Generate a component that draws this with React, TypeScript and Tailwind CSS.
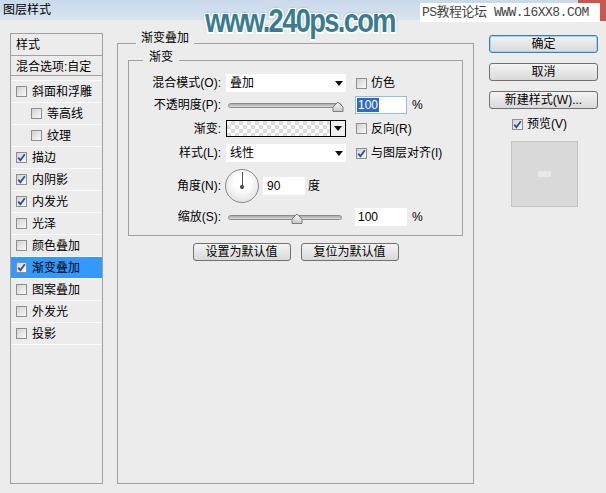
import React from 'react';

const FONT = "font-['Liberation_Sans','Noto_Sans_CJK_SC',sans-serif]";

const Check = ({ checked }: { checked?: boolean }) => (
  <span className="relative block w-[11px] h-[11px] shrink-0 border border-[#8e8e8e] bg-linear-to-br from-[#d2d2d2] to-[#f9f9f9]">
    {checked && (
      <svg className="absolute left-0 top-0" width="9" height="9" viewBox="0 0 9 9">
        <path d="M1.3 4.6 L3.4 7.2 L7.8 1.2" fill="none" stroke="#2b4ea2" strokeWidth="1.8" />
      </svg>
    )}
  </span>
);

const Arrow = () => (
  <svg width="8" height="5" viewBox="0 0 8 5">
    <path d="M0 0 H8 L4 5 Z" fill="#111" />
  </svg>
);

const Thumb = () => (
  <svg width="12" height="11" viewBox="0 0 12 11">
    <defs>
      <linearGradient id="tg" x1="0" y1="0" x2="0" y2="1">
        <stop offset="0" stopColor="#fafafa" />
        <stop offset="1" stopColor="#c8c8c8" />
      </linearGradient>
    </defs>
    <path d="M1 10.5 V6 L6 1 L11 6 V10.5 Z" fill="url(#tg)" stroke="#7c7c7c" />
  </svg>
);

const Slider = ({ pos }: { pos: number }) => (
  <div className="relative w-[120px] h-[18px] flex items-center">
    <div className="ml-[2px] w-[114px] h-[5px] rounded-full border border-[#8c8c8c] bg-linear-to-b from-[#a8a8a8] to-[#dedede]" />
    <div className="absolute top-[5px]" style={{ left: pos }}>
      <Thumb />
    </div>
  </div>
);

const Btn = ({ label, w, primary }: { label: string; w: string; primary?: boolean }) => (
  <div
    className={`${w} h-[18px] flex items-center justify-center rounded-[3px] border bg-linear-to-b from-[#f4f4f4] to-[#d9d9d9] text-[12px] text-black ${
      primary ? 'border-[#3c7fb1] shadow-[inset_0_0_0_1px_#9fd2f2]' : 'border-[#707070]'
    }`}
  >
    {label}
  </div>
);

const Select = ({ value }: { value: string }) => (
  <div className="w-[120px] h-[18px] bg-white flex items-center justify-between pl-[4px] pr-[3px] text-[12px]">
    <span>{value}</span>
    <Arrow />
  </div>
);

const Label = ({ text }: { text: string }) => (
  <div className="w-[92px] text-right text-[12px] leading-[14px] text-black">{text}</div>
);

const styles: { name: string; checked?: boolean; sub?: boolean; active?: boolean }[] = [
  { name: '斜面和浮雕' },
  { name: '等高线', sub: true },
  { name: '纹理', sub: true },
  { name: '描边', checked: true },
  { name: '内阴影', checked: true },
  { name: '内发光', checked: true },
  { name: '光泽' },
  { name: '颜色叠加' },
  { name: '渐变叠加', checked: true, active: true },
  { name: '图案叠加' },
  { name: '外发光' },
  { name: '投影' },
];

export default function App() {
  return (
    <div className={`relative w-[606px] h-[493px] overflow-hidden bg-[#ececec] text-black ${FONT}`}>
      {/* title bar */}
      <div className="h-[20px] bg-linear-to-b from-[#c8d9ea] to-[#d8e4f0] pl-[3px] flex items-center text-[12px]">
        图层样式
      </div>

      <div className="flex items-start">
        {/* style list */}
        <div className="mt-[13px] ml-[10px] w-[93px] h-[451px] border border-[#a0a0a0] text-[12px]">
          <div className="h-[22px] border-b border-[#a0a0a0] pl-[5px] flex items-center">样式</div>
          <div className="h-[20px] border-b border-[#a0a0a0] pl-[5px] pt-[2px] flex items-center">混合选项:自定</div>
          <div className="pt-[4px]">
            {styles.map((s) => (
              <div key={s.name} className="h-[22px] border-t border-[#fbfbfb]">
                <div
                  className={`h-[21px] flex items-center ${s.sub ? 'pl-[20px]' : 'pl-[5px]'} ${
                    s.active ? 'bg-[#3399ff]' : ''
                  }`}
                >
                  <Check checked={s.checked} />
                  <span className="ml-[5px]">{s.name}</span>
                </div>
              </div>
            ))}
            <div className="border-t border-[#fbfbfb]" />
          </div>
        </div>

        {/* main group */}
        <div className="relative mt-[23px] ml-[14px] w-[357px] h-[441px] border border-[#a0a0a0]">
          <div className="absolute -top-[13px] left-[18px] px-[5px] bg-[#ececec] text-[12px] leading-[14px]">渐变叠加</div>

          <div className="relative mt-[16px] ml-[10px] w-[335px] h-[176px] border border-[#a0a0a0]">
            <div className="absolute -top-[11px] left-[14px] px-[6px] bg-[#ececec] text-[12px] leading-[14px]">渐变</div>

            {/* row 1 */}
            <div className="mt-[13px] h-[18px] flex items-center">
              <Label text="混合模式(O):" />
              <div className="ml-[5px]">
                <Select value="叠加" />
              </div>
              <div className="ml-[10px]">
                <Check />
              </div>
              <span className="ml-[4px] text-[12px]">仿色</span>
            </div>

            {/* row 2 */}
            <div className="mt-[4px] h-[18px] flex items-center">
              <Label text="不透明度(P):" />
              <div className="ml-[5px]">
                <Slider pos={106} />
              </div>
              <div className="ml-[9px] w-[52px] h-[18px] bg-white border border-[#8fbfe8] flex items-center pl-[1px] text-[12px]">
                <span className="bg-[#3169c6] text-white px-[1px] leading-[14px]">100</span>
              </div>
              <span className="ml-[5px] text-[12px]">%</span>
            </div>

            {/* row 3 */}
            <div className="mt-[6px] h-[17px] flex items-center">
              <Label text="渐变:" />
              <div className="ml-[5px] flex h-[17px] border border-black">
                <div className="w-[103px] h-full bg-white bg-[linear-gradient(45deg,#dcdcdc_25%,transparent_25%,transparent_75%,#dcdcdc_75%),linear-gradient(45deg,#dcdcdc_25%,transparent_25%,transparent_75%,#dcdcdc_75%)] bg-size-[8px_8px] bg-position-[0_0,4px_4px]" />
                <div className="w-[15px] h-full border-l border-black bg-[#f0f0f0] flex items-center justify-center">
                  <Arrow />
                </div>
              </div>
              <div className="ml-[10px]">
                <Check />
              </div>
              <span className="ml-[4px] text-[12px]">反向(R)</span>
            </div>

            {/* row 4 */}
            <div className="mt-[7px] h-[18px] flex items-center">
              <Label text="样式(L):" />
              <div className="ml-[5px]">
                <Select value="线性" />
              </div>
              <div className="ml-[10px]">
                <Check checked />
              </div>
              <span className="ml-[4px] text-[12px]">与图层对齐(I)</span>
            </div>

            {/* row 5 */}
            <div className="mt-[7px] h-[34px] flex items-center">
              <Label text="角度(N):" />
              <div className="ml-[4px] relative w-[34px] h-[34px] rounded-full border border-[#8a8a8a] bg-[radial-gradient(circle_at_50%_40%,#ffffff_30%,#d4d4d4_100%)]">
                <div className="absolute left-[15.5px] top-[2px] w-[1px] h-[14px] bg-[#555]" />
                <div className="absolute left-[14px] top-[14.5px] w-[4px] h-[4px] rounded-full bg-[#444]" />
              </div>
              <div className="ml-[4px] w-[42px] h-[18px] bg-white flex items-center pl-[4px] text-[12px]">90</div>
              <span className="ml-[3px] text-[12px]">度</span>
            </div>

            {/* row 6 */}
            <div className="mt-[5px] h-[18px] flex items-center">
              <Label text="缩放(S):" />
              <div className="ml-[5px]">
                <Slider pos={65} />
              </div>
              <div className="ml-[9px] w-[52px] h-[18px] bg-white flex items-center pl-[3px] text-[12px]">100</div>
              <span className="ml-[5px] text-[12px]">%</span>
            </div>
          </div>

          <div className="mt-[7px] flex justify-center gap-[10px]">
            <Btn label="设置为默认值" w="w-[98px]" />
            <Btn label="复位为默认值" w="w-[98px]" />
          </div>
        </div>

        {/* right column */}
        <div className="mt-[15px] ml-[15px] w-[109px] flex flex-col">
          <Btn label="确定" w="w-[109px]" primary />
          <div className="mt-[10px]">
            <Btn label="取消" w="w-[109px]" />
          </div>
          <div className="mt-[10px]">
            <Btn label="新建样式(W)..." w="w-[109px]" />
          </div>
          <div className="mt-[8px] ml-[23px] h-[14px] flex items-center text-[12px]">
            <Check checked />
            <span className="ml-[4px]">预览(V)</span>
          </div>
          <div className="mt-[10px] ml-[22px] w-[67px] h-[66px] border border-[#c4c4c4] bg-[#d9d9d9] flex items-center justify-center">
            <div className="w-[13px] h-[6px] bg-[#e8e8e8]" />
          </div>
        </div>
      </div>

      {/* watermarks */}
      <div className="absolute left-[578px] -top-[3px] w-[32px] h-[24px] rounded-[3px] bg-[#c9574f]" />
      <div className="absolute left-[420px] top-[3px] w-[180px] h-[19px] bg-white flex items-center pl-[2px] text-[13px] text-[#444] font-['Liberation_Mono','Noto_Sans_CJK_SC',monospace] tracking-[-0.5px]">
        PS教程论坛 WWW.16XX8.COM
      </div>
      <div className="absolute left-[205px] top-[-5px] origin-left scale-x-[0.8] text-[34px] font-bold tracking-[-2px] text-[#3a7b90] font-['Liberation_Sans',sans-serif] [text-shadow:1.5px_0_0_#fff,-1.5px_0_0_#fff,0_1.5px_0_#fff,0_-1.5px_0_#fff,1.5px_1.5px_0_#fff,-1.5px_-1.5px_0_#fff,1.5px_-1.5px_0_#fff,-1.5px_1.5px_0_#fff,0_0_3px_#1b4654]">
        www.240ps.com
      </div>
    </div>
  );
}
